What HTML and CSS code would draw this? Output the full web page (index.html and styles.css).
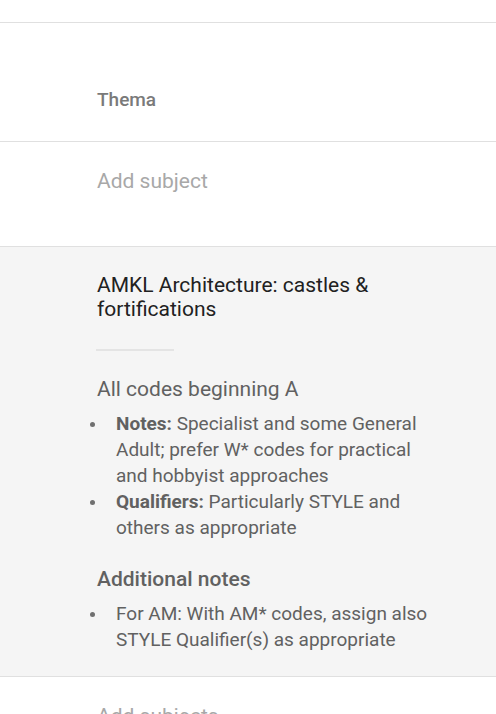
FILE: index.html
```html
<!DOCTYPE html>
<html>
<head>
<meta charset="utf-8">
<link rel="stylesheet" href="styles.css">
</head>
<body>
<div class="top"></div>
<section class="label-row">Thema</section>
<section class="input-row">Add subject</section>
<section class="detail">
  <h2 class="title">AMKL Architecture: castles &amp; fortifications</h2>
  <div class="rule"></div>
  <h3 class="group">All codes beginning A</h3>
  <ul class="notes">
    <li><b>Notes:</b> Specialist and some General Adult; prefer W* codes for practical and hobbyist approaches</li>
    <li><b>Qualifiers:</b> Particularly STYLE and others as appropriate</li>
  </ul>
  <h3 class="group extra">Additional notes</h3>
  <ul class="notes">
    <li>For AM: With AM* codes, assign also STYLE Qualifier(s) as appropriate</li>
  </ul>
</section>
<section class="input-row">Add subjects</section>
</body>
</html>
```

FILE: styles.css
```css
html, body {
  margin: 0;
  padding: 0;
  background: #ffffff;
  font-family: Roboto, "Noto Sans", sans-serif;
}
body {
  width: 496px;
  height: 714px;
  overflow: hidden;
}
.top {
  height: 22px;
  border-bottom: 1px solid #e0e0e0;
}
.label-row {
  padding: 65px 0 29px 97px;
  font-size: 19px;
  line-height: 24px;
  font-weight: 500;
  color: #7a7a7a;
  border-bottom: 1px solid #e0e0e0;
}
.input-row {
  padding: 27px 0 53px 97px;
  font-size: 21px;
  line-height: 24px;
  color: #a8a8a8;
  border-bottom: 1px solid #e0e0e0;
}
.detail {
  background: #f5f5f5;
  padding: 26px 50px 23px 97px;
  border-bottom: 1px solid #e0e0e0;
}
.title {
  margin: 0;
  font-size: 21px;
  line-height: 24px;
  font-weight: 400;
  color: #212121;
}
.rule {
  width: 78px;
  height: 2px;
  background: #e4e4e4;
  margin: 28px 0 26px -1px;
}
.group {
  margin: 0;
  font-size: 21px;
  line-height: 24px;
  font-weight: 400;
  color: #616161;
}
.group.extra {
  font-weight: 500;
  margin-top: 26px;
}
.notes {
  margin: 10px 0 0 0;
  padding-left: 19px;
  list-style: none;
  font-size: 19px;
  line-height: 26px;
  color: #616161;
}
.notes li {
  position: relative;
}
.notes li::before {
  content: "";
  position: absolute;
  left: -26px;
  top: 11px;
  width: 5px;
  height: 5px;
  border-radius: 50%;
  background: #707070;
}
.notes b {
  font-weight: 700;
}
```
